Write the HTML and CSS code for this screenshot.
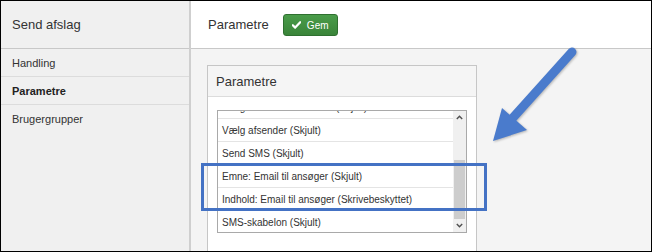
FILE: index.html
```html
<!DOCTYPE html>
<html lang="da">
<head>
<meta charset="utf-8">
<title>Send afslag</title>
<link rel="stylesheet" href="styles.css">
</head>
<body>
<div class="frame">
  <aside class="sidebar">
    <div class="side-head">Send afslag</div>
    <nav class="side-nav">
      <div class="side-item">Handling</div>
      <div class="side-item active">Parametre</div>
      <div class="side-item">Brugergrupper</div>
    </nav>
  </aside>
  <main class="main">
    <header class="main-head">
      <span class="title">Parametre</span>
      <button class="btn-save" type="button">
        <svg class="check" width="9" height="8" viewBox="0 0 9 8"><path d="M0.8 4.2 L3.2 6.6 L8.2 1.2" fill="none" stroke="#fff" stroke-width="2.2" stroke-linecap="round" stroke-linejoin="round"/></svg>
        <span>Gem</span>
      </button>
    </header>
    <section class="content">
      <div class="panel">
        <div class="panel-head">Parametre</div>
        <div class="panel-body">
          <div class="listbox">
            <div class="list-items">
              <div class="list-inner">
                <div class="list-item">Vælg skabelon for brevet (Skjult)</div>
                <div class="list-item">Vælg afsender (Skjult)</div>
                <div class="list-item">Send SMS (Skjult)</div>
                <div class="list-item">Emne: Email til ansøger (Skjult)</div>
                <div class="list-item">Indhold: Email til ansøger (Skrivebeskyttet)</div>
                <div class="list-item">SMS-skabelon (Skjult)</div>
              </div>
            </div>
            <div class="scrollbar">
              <div class="sb-btn"><svg width="7" height="5" viewBox="0 0 7 5"><path d="M0.8 4 L3.5 1.2 L6.2 4" fill="none" stroke="#505050" stroke-width="1.4"/></svg></div>
              <div class="sb-track"><div class="sb-thumb"></div></div>
              <div class="sb-btn"><svg width="7" height="5" viewBox="0 0 7 5"><path d="M0.8 1 L3.5 3.8 L6.2 1" fill="none" stroke="#505050" stroke-width="1.4"/></svg></div>
            </div>
          </div>
        </div>
      </div>
    </section>
  </main>
  <div class="highlight"></div>
  <svg class="arrow" width="652" height="252" viewBox="0 0 652 252">
    <line x1="572" y1="52" x2="510" y2="121" stroke="#4a7bcc" stroke-width="9" stroke-linecap="round"/>
    <polygon points="493,141 502,108 527,130" fill="#4a7bcc"/>
  </svg>
</div>
</body>
</html>
```
FILE: styles.css
```css
* { box-sizing: border-box; }
html, body { margin: 0; padding: 0; }
body {
  font-family: "Liberation Sans", Arial, sans-serif;
  color: #333;
  background: #fff;
}
.frame {
  position: relative;
  width: 652px;
  height: 252px;
  border: 1px solid #000;
  display: flex;
  overflow: hidden;
}
.sidebar {
  width: 190px;
  flex: none;
  background: #f0f0f0;
  border-right: 2px solid #cfcfcf;
}
.side-head {
  height: 48px;
  border-bottom: 1px solid #c8c8c8;
  padding-left: 11px;
  display: flex;
  align-items: center;
  font-size: 13px;
  color: #333;
}
.side-item {
  height: 28px;
  border-bottom: 1px solid #dcdcdc;
  padding-left: 11px;
  display: flex;
  align-items: center;
  font-size: 11px;
  color: #333;
}
.side-item:last-child { border-bottom: none; }
.side-item.active { font-weight: bold; color: #222; }

.main {
  flex: 1;
  display: flex;
  flex-direction: column;
  background: #f4f4f4;
}
.main-head {
  height: 48px;
  flex: none;
  background: #fff;
  border-bottom: 1px solid #c8c8c8;
  display: flex;
  align-items: center;
  padding-left: 17px;
  gap: 14px;
}
.title { font-size: 13px; color: #333; }
.btn-save {
  height: 22px;
  width: 55px;
  margin-top: 1px;
  display: flex;
  align-items: center;
  justify-content: center;
  gap: 6px;
  padding: 0;
  border: 1px solid #2f7030;
  border-radius: 3px;
  background: linear-gradient(#4a9c4a, #3a8439);
  color: #fff;
  font-family: "Liberation Sans", Arial, sans-serif;
  font-size: 10px;
}
.check { display: block; }

.content {
  flex: 1;
  padding: 16px 0 0 16px;
}
.panel {
  width: 270px;
  height: 200px;
  border: 1px solid #c6c6c6;
  background: #fff;
}
.panel-head {
  height: 31px;
  background: #f5f5f5;
  border-bottom: 1px solid #dcdcdc;
  padding-left: 8px;
  display: flex;
  align-items: center;
  font-size: 13px;
  color: #333;
}
.panel-body {
  padding: 13px 9px 0 9px;
}
.listbox {
  height: 123px;
  border: 1px solid #a9a9a9;
  display: flex;
}
.list-items {
  flex: 1;
  overflow: hidden;
}
.list-inner {
  margin-top: -15px;
}
.list-item {
  height: 23px;
  border-bottom: 1px solid #e4e4e4;
  padding-left: 4px;
  display: flex;
  align-items: center;
  font-size: 10px;
  color: #333;
  white-space: nowrap;
}
.scrollbar {
  width: 13px;
  flex: none;
  background: #f0f0f0;
  display: flex;
  flex-direction: column;
}
.sb-btn {
  height: 13px;
  display: flex;
  align-items: center;
  justify-content: center;
}
.sb-track {
  flex: 1;
  padding-top: 36px;
}
.sb-thumb {
  height: 59px;
  margin: 0 1px;
  background: #cdcdcd;
}

.highlight {
  position: absolute;
  left: 200px;
  top: 162px;
  width: 286px;
  height: 48px;
  border: 3px solid #4472c4;
}
.arrow {
  position: absolute;
  left: -1px;
  top: -1px;
  filter: drop-shadow(1px 1px 1px rgba(0,0,0,0.25));
}
```
